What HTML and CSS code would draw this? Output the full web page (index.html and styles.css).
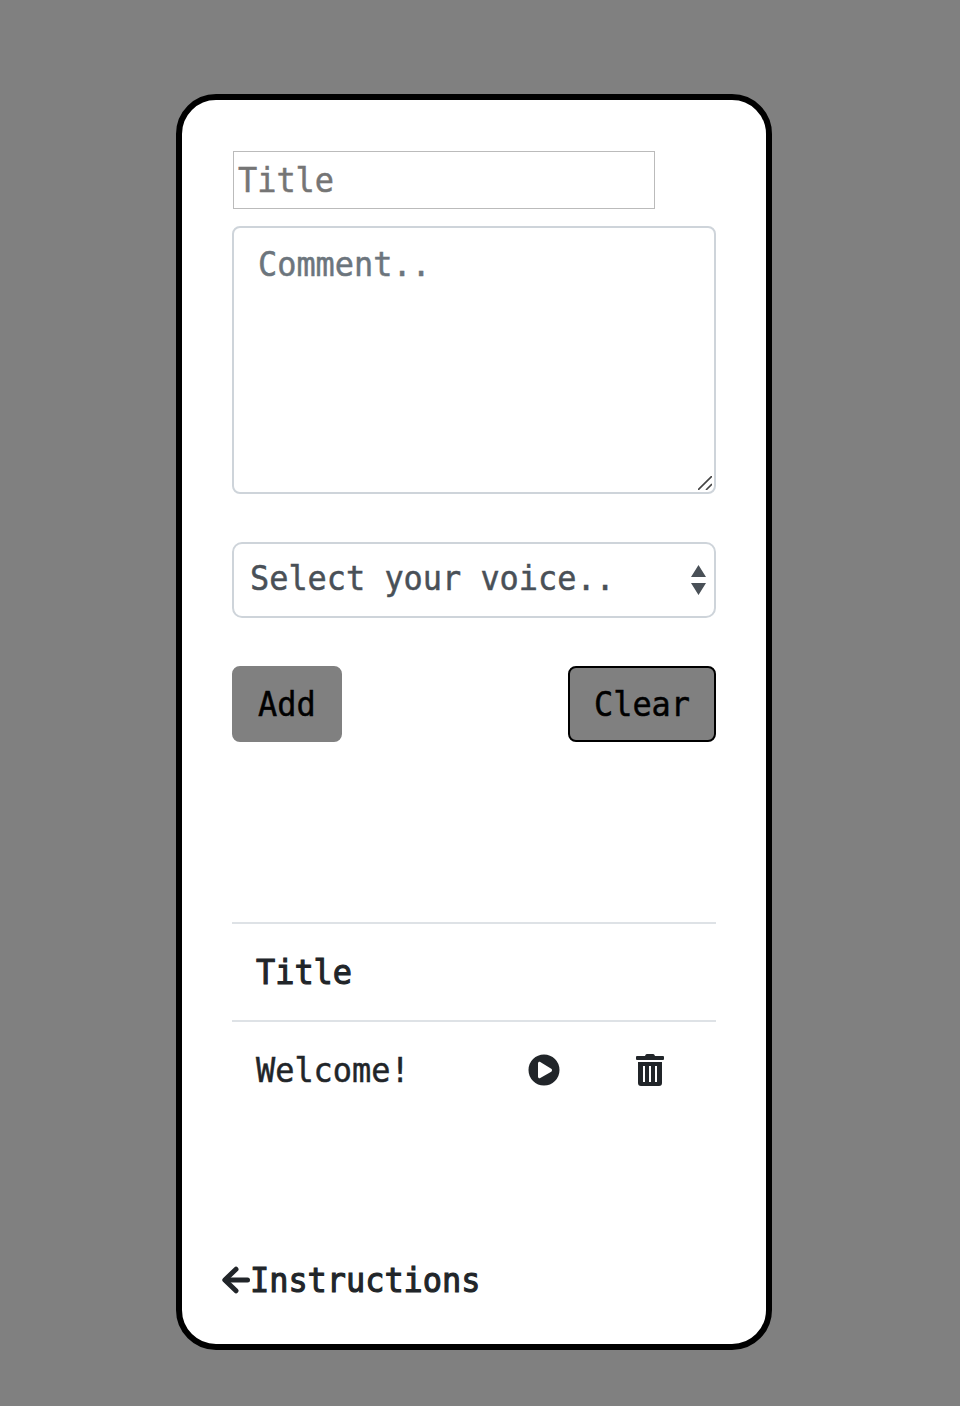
FILE: index.html
```html
<!DOCTYPE html>
<html lang="en">
<head>
<meta charset="utf-8">
<title>Voice notes</title>
<link rel="stylesheet" href="styles.css">
</head>
<body>
<main class="card">
  <form class="form">
    <div class="title-input"><span class="txt">Title</span></div>
    <div class="comment">
      <span class="txt">Comment..</span>
      <svg class="grip" width="14" height="14" viewBox="0 0 14 14"><path d="M0 14 14 0M8 14l6-6" stroke="#444" stroke-width="1.6" fill="none"/></svg>
    </div>
    <div class="select">
      <span class="txt">Select your voice..</span>
      <svg width="15" height="30" viewBox="0 0 15 30" fill="#495057"><path d="M0 12 7.500 0 15 12zM0 18h15L7.500 30z"/></svg>
    </div>
    <div class="actions">
      <button type="button" class="btn btn-add"><span class="txt">Add</span></button>
      <button type="button" class="btn btn-clear"><span class="txt">Clear</span></button>
    </div>
  </form>
  <section class="list">
    <div class="row heading"><span class="txt strong">Title</span></div>
    <div class="row">
      <span class="txt name">Welcome!</span>
      <svg class="play" width="32" height="32" viewBox="0 0 512 512" fill="#212529"><path d="M256 8a248 248 0 1 0 0 496 248 248 0 0 0 0-496zm116 274L196 383c-16 9-36-2-36-21V150c0-18 20-30 36-21l176 107c16 9 16 37 0 46z"/></svg>
      <svg class="trash" width="28" height="32" viewBox="0 0 28 32" fill="#212529"><path d="M1 2h8l.6-1.200Q10 0 11 0h6q1 0 1.400.8L19 2h8q1 0 1 1v2q0 1-1 1H1Q0 6 0 5V3q0-1 1-1z"/><path fill-rule="evenodd" d="M2 8h24v21q0 3-3 3H5q-3 0-3-3zM7 12v16h2V12zm6 0v16h2V12zm6 0v16h2V12z"/></svg>
    </div>
  </section>
  <footer class="footer">
    <svg width="28" height="28" viewBox="0 0 28 28" fill="none" stroke="#212529" stroke-width="5" stroke-linecap="round" stroke-linejoin="round"><path d="M14 3.200 2.800 14 14 24.800"/><path d="M4 14h21.500"/></svg>
    <span class="txt strong">Instructions</span>
  </footer>
</main>
</body>
</html>
```
FILE: styles.css
```css
* { box-sizing: border-box; }

body {
  margin: 0;
  min-height: 1406px;
  padding: 94px 0 0 176px;
  background: #808080;
  color: #212529;
  font: 34px/48px "DejaVu Sans Mono", monospace;
}

svg { display: block; flex: none; }

.card {
  display: flex;
  flex-direction: column;
  width: 596px;
  height: 1256px;
  padding: 51px 50px 0;
  background: #fff;
  border: 6px solid #000;
  border-radius: 40px;
}

/* Condensed monospace lettering */
.txt {
  display: inline-block;
  white-space: nowrap;
  transform: scaleX(.938);
  transform-origin: left center;
  -webkit-text-stroke: .5px currentColor;
}

.strong { -webkit-text-stroke-width: 1.1px; }

.title-input {
  width: 422px;
  height: 58px;
  margin-left: 1px;
  padding: 4px;
  border: 1px solid #bbb;
  color: #757575;
}

.comment {
  position: relative;
  height: 268px;
  margin-top: 17px;
  padding: 12px 24px;
  border: 2px solid #ced4da;
  border-radius: 8px;
  color: #6c757d;
}

.grip {
  position: absolute;
  right: 2px;
  bottom: 2px;
}

.select {
  display: flex;
  align-items: center;
  justify-content: space-between;
  height: 76px;
  margin-top: 48px;
  padding: 0 8px 0 16px;
  border: 2px solid #ced4da;
  border-radius: 10px;
  color: #495057;
}

.select .txt { padding-bottom: 4px; }

.actions {
  display: flex;
  justify-content: space-between;
  margin-top: 48px;
}

.btn {
  height: 76px;
  padding: 0 0 0 24px;
  background: #808080;
  border: 2px solid #808080;
  border-radius: 8px;
  color: #000;
  font: inherit;
  text-align: left;
}

.btn-add { width: 110px; }
.btn-clear { width: 148px; border-color: #000; }

.list { margin-top: 180px; }

.row {
  display: flex;
  align-items: center;
  height: 96px;
  padding-left: 24px;
}

.heading {
  height: 100px;
  border-top: 2px solid #dee2e6;
  border-bottom: 2px solid #dee2e6;
}

.row .name { width: 272px; }
.trash { margin-left: 76px; }

.footer {
  display: flex;
  align-items: center;
  margin: 138px 0 0 -10px;
}
```
